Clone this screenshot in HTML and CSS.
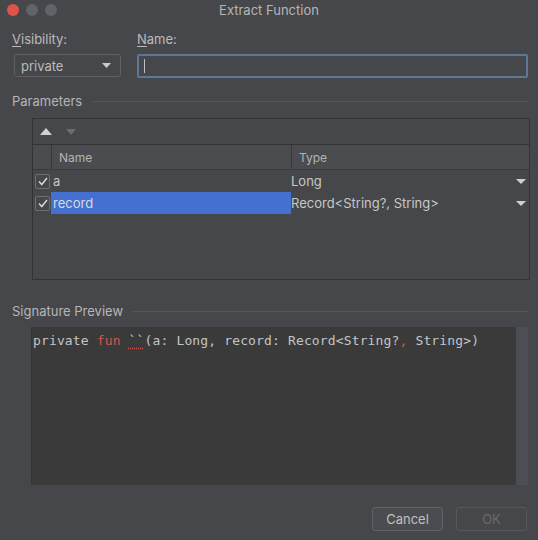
FILE: index.html
```html
<!DOCTYPE html>
<html>
<head>
<meta charset="utf-8">
<link rel="stylesheet" href="styles.css">
</head>
<body>
<div class="dialog">
  <div class="titlebar">
    <div class="lights">
      <span class="light red"></span>
      <span class="light gray"></span>
      <span class="light gray"></span>
    </div>
    <div class="title">Extract Function</div>
  </div>

  <div class="top">
    <div class="field vis">
      <div class="label"><u>V</u>isibility:</div>
      <div class="combo">
        <span>private</span>
        <svg class="tri" width="9" height="5" viewBox="0 0 9 5"><path d="M0 0H9L4.5 5Z" fill="#c9cacb"/></svg>
      </div>
    </div>
    <div class="field name">
      <div class="label"><u>N</u>ame:</div>
      <div class="input"><span class="caret"></span></div>
    </div>
  </div>

  <div class="section"><span>Parameters</span><span class="rule"></span></div>

  <div class="panel">
    <div class="toolbar">
      <svg width="12" height="7" viewBox="0 0 12 7"><path d="M0 7L6 0L12 7Z" fill="#d2d2d2"/></svg>
      <svg width="10" height="6" viewBox="0 0 10 6"><path d="M0 0H10L5 6Z" fill="#6b6c6f"/></svg>
    </div>
    <div class="thead">
      <div class="c0"></div>
      <div class="c1">Name</div>
      <div class="c2">Type</div>
    </div>
    <div class="row">
      <div class="c0"><span class="check"><svg width="10" height="9" viewBox="0 0 10 9"><path d="M1 4.5L3.8 7.5L9 1" fill="none" stroke="#d8d8d8" stroke-width="1.5"/></svg></span></div>
      <div class="c1">a</div>
      <div class="c2"><span>Long</span><svg class="tri" width="10" height="5" viewBox="0 0 10 5"><path d="M0 0H10L5 5Z" fill="#d0d0d0"/></svg></div>
    </div>
    <div class="row">
      <div class="c0"><span class="check"><svg width="10" height="9" viewBox="0 0 10 9"><path d="M1 4.5L3.8 7.5L9 1" fill="none" stroke="#d8d8d8" stroke-width="1.5"/></svg></span></div>
      <div class="c1 sel">record</div>
      <div class="c2"><span>Record&lt;String?, String&gt;</span><svg class="tri" width="10" height="5" viewBox="0 0 10 5"><path d="M0 0H10L5 5Z" fill="#d0d0d0"/></svg></div>
    </div>
  </div>

  <div class="section sig"><span>Signature Preview</span><span class="rule"></span></div>

  <div class="editor">
    <div class="code">private <span class="kw">fun</span> <span class="err">``</span>(a: Long, record: Record&lt;String?<span class="kw2">,</span> String&gt;)</div>
    <div class="scroll"></div>
  </div>

  <div class="footer">
    <div class="btn">Cancel</div>
    <div class="btn disabled">OK</div>
  </div>
</div>
</body>
</html>
```
FILE: styles.css
```css
* { box-sizing: border-box; }
html, body { margin: 0; padding: 0; }
body {
  width: 538px;
  height: 540px;
  background: #46474a;
  font-family: Inter, "Liberation Sans", sans-serif;
  font-size: 13px;
  color: #bbbcbd;
  overflow: hidden;
}
.dialog { display: flex; flex-direction: column; height: 540px; }

.titlebar {
  height: 22px;
  display: flex;
  align-items: center;
  position: relative;
}
.lights { display: flex; gap: 7px; padding-left: 7px; margin-top: -2px; }
.light { width: 12px; height: 12px; border-radius: 50%; }
.red { background: #e0534a; }
.gray { background: #5f6469; }
.title {
  position: absolute;
  left: 0; right: 0; top: 2px;
  text-align: center;
  color: #b5b6b7;
  font-size: 13px;
}

.top { display: flex; padding: 9px 10px 0 12px; gap: 15px; }
.field .label { height: 16px; line-height: 16px; margin-bottom: 7px; color: #bbbcbd; }
.field .label u { text-decoration-thickness: 1px; text-underline-offset: 2px; }
.vis { width: 109px; }
.combo {
  margin-left: 2px;
  width: 107px;
  height: 23px;
  border: 1px solid #5e6063;
  border-radius: 3px;
  background: #45474a;
  display: flex;
  align-items: center;
  justify-content: space-between;
  padding: 0 9px 0 6px;
}
.name { flex: 1; }
.name .label { padding-left: 1px; }
.input {
  margin-left: 1px;
  height: 24px;
  border: 2px solid #5d7896;
  border-radius: 2px;
  background: #45474a;
  display: flex;
  align-items: center;
  padding-left: 5px;
}
.caret { width: 1px; height: 14px; background: #c0c0c0; }

.section {
  display: flex;
  align-items: center;
  padding: 0 10px 0 12px;
  height: 18px;
  margin-top: 14px;
  gap: 10px;
  color: #b5b6b7;
}
.section .rule { flex: 1; height: 1px; background: #55575a; margin-top: 1px; }

.panel {
  margin: 8px 8px 0 32px;
  height: 162px;
  border: 1px solid #323335;
  background: #46474a;
}
.toolbar {
  height: 26px;
  display: flex;
  align-items: center;
  gap: 14px;
  padding-left: 7px;
  border-bottom: 1px solid #323335;
}
.thead {
  display: flex;
  height: 25px;
  background: #4b4c4f;
  border-bottom: 1px solid #393a3c;
  color: #b3b4b5;
  font-size: 12px;
}
.thead > div { display: flex; align-items: center; }
.c0 { width: 18px; flex: none; }
.c1 { width: 240px; flex: none; padding-left: 7px; }
.c2 { flex: 1; padding-left: 7px; }
.thead .c1 { border-left: 1px solid #38393b; }
.thead .c2 { border-left: 1px solid #38393b; }

.row { display: flex; height: 22px; align-items: center; }
.row > div { height: 22px; display: flex; align-items: center; }
.row .c0 { padding-left: 2px; }
.row .c1 { padding-left: 2px; color: #c6c7c8; }
.row .c1.sel { background: #4470d2; color: #d9dbe0; }
.row .c2 { padding-left: 0; justify-content: space-between; padding-right: 3px; color: #c6c7c8; }
.check {
  width: 15px; height: 15px;
  border: 1px solid #6d6f72;
  border-radius: 2px;
  display: flex; align-items: center; justify-content: center;
  background: #45474a;
}

.sig { margin-top: 22px; }

.editor {
  margin: 7px 10px 0 31px;
  height: 158px;
  background: #3a3a3b;
  display: flex;
  border-left: 1px solid #343435;
}
.code {
  flex: 1;
  font-family: "DejaVu Sans Mono", monospace;
  font-size: 13px;
  letter-spacing: 0.14px;
  color: #c2c5c8;
  padding: 5px 0 0 1px;
  white-space: pre;
  line-height: 17px;
}
.kw { color: #d0574e; }
.kw2 { color: #c8653c; }
.err { text-decoration: underline dotted #d0574e; text-underline-offset: 3px; }
.scroll { width: 12px; background: #4b4f54; margin-left: auto; }

.footer {
  display: flex;
  justify-content: flex-end;
  gap: 13px;
  padding: 22px 11px 0 0;
}
.btn {
  width: 71px;
  height: 24px;
  border: 1px solid #5e6468;
  border-radius: 3px;
  background: #4a4c4f;
  display: flex;
  align-items: center;
  justify-content: center;
  color: #bfc0c1;
}
.btn.disabled { background: transparent; color: #686a6c; border-color: #55595c; }
```
